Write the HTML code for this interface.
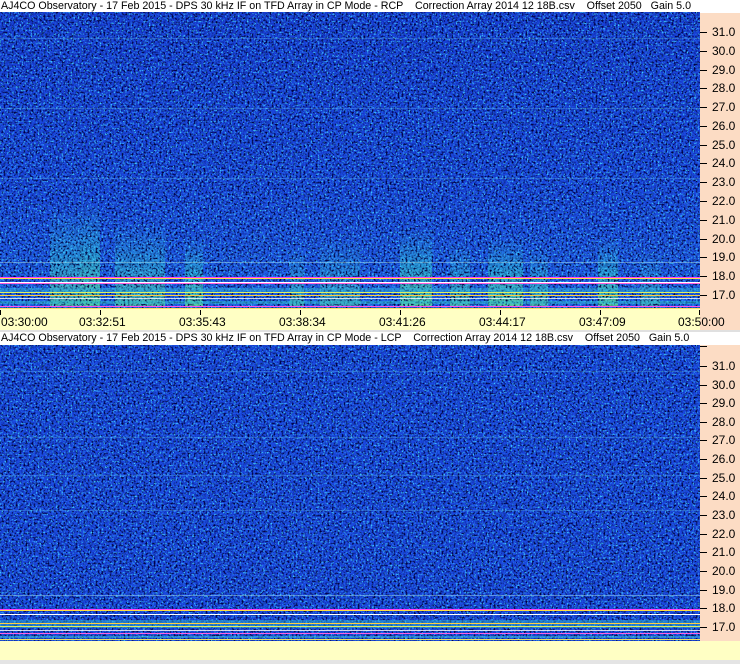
<!DOCTYPE html>
<html><head><meta charset="utf-8"><style>
*{margin:0;padding:0}
body{width:740px;height:664px;position:relative;background:#fcdcc4;overflow:hidden;font-family:"Liberation Sans",Arial,sans-serif}
.title{position:absolute;left:0;width:740px;height:13px;background:#fff;font-size:10.7px;line-height:13px;color:#000;white-space:pre;padding-left:1px}
.tbar{position:absolute;left:0;width:700px;background:#ffffc4}
.lab{position:absolute;font-size:12px;color:#000}
.tick{position:absolute;width:7px;height:1px;background:#000;left:700px}
.vt{position:absolute;width:1px;height:5px;background:#000;top:310px}
svg{position:absolute;left:0}
</style></head><body>
<svg width="0" height="0" style="position:absolute">
<defs>
<filter id="dk" x="0" y="0" width="100%" height="100%"><feTurbulence type="fractalNoise" baseFrequency="0.5" numOctaves="2" seed="3"/><feColorMatrix type="matrix" values="0 0 0 0 0  0 0 0 0 0  0 0 0 0 0.05  -4 0 0 0 2.1"/></filter>
<filter id="lt" x="0" y="0" width="100%" height="100%"><feTurbulence type="fractalNoise" baseFrequency="0.55" numOctaves="2" seed="7"/><feColorMatrix type="matrix" values="0 0 0 0 0.05  0 0 0 0 0.6  0 0 0 0 1  0 4 0 0 -2.2"/></filter>
<linearGradient id="st" x1="0" y1="0" x2="0" y2="1"><stop offset="0" stop-color="#30d0e0" stop-opacity="0"/><stop offset="0.5" stop-color="#30d8c8" stop-opacity="0.5"/><stop offset="1" stop-color="#70f080" stop-opacity="0.75"/></linearGradient>
<linearGradient id="bg1" x1="0" y1="0" x2="0" y2="1"><stop offset="0" stop-color="#1840d8"/><stop offset="0.6" stop-color="#1a48e0"/><stop offset="1" stop-color="#2060e8"/></linearGradient>
</defs></svg>

<div class="title" style="top:0">AJ4CO Observatory - 17 Feb 2015 - DPS 30 kHz IF on TFD Array in CP Mode - RCP    Correction Array 2014 12 18B.csv    Offset 2050   Gain 5.0</div>

<svg style="top:12px" width="700" height="297">
<rect width="700" height="297" fill="url(#bg1)"/>
<g fill="url(#st)">
<rect x="50" y="195" width="30" height="100" opacity=".8"/>
<rect x="80" y="190" width="20" height="105"/>
<rect x="115" y="210" width="50" height="85" opacity=".8"/>
<rect x="185" y="225" width="18" height="70"/>
<rect x="290" y="235" width="14" height="60" opacity=".7"/>
<rect x="320" y="225" width="40" height="70" opacity=".6"/>
<rect x="400" y="215" width="32" height="80"/>
<rect x="450" y="230" width="20" height="65" opacity=".8"/>
<rect x="488" y="225" width="35" height="70"/>
<rect x="530" y="235" width="18" height="60" opacity=".8"/>
<rect x="598" y="225" width="20" height="70"/>
<rect x="640" y="240" width="20" height="55" opacity=".6"/>
</g>
<rect width="700" height="297" filter="url(#dk)"/>
<rect width="700" height="297" filter="url(#lt)"/>
<g fill="#60c0f0" opacity=".3"><rect y="26" width="700" height="1"/><rect y="96" width="700" height="1"/><rect y="166" width="700" height="1"/></g>
<rect x="0" y="250" width="700" height="1" fill="#a0e0f0" opacity=".5"/>
<rect y="265" width="700" height="1" fill="#ff40ff"/>
<rect y="266" width="700" height="1" fill="#ffe040"/>
<rect y="270" width="700" height="1" fill="#ffffff"/>
<rect y="271" width="700" height="1" fill="#ff60e0"/>
<rect y="276" width="700" height="5" fill="#30b0e0" opacity=".5"/>
<rect y="280" width="700" height="1" fill="#e0f060"/>
<rect y="283" width="700" height="1" fill="#ffd040"/>
<rect y="286" width="700" height="1" fill="#ffffff" opacity=".8"/>
<rect y="289" width="700" height="3" fill="#30c0d0" opacity=".5"/>
<rect y="294" width="700" height="1" fill="#ff50f0"/>
<rect y="296" width="700" height="1" fill="#ffe060"/>
</svg>

<div class="tbar" style="top:309px;height:21px"></div>
<div class="vt" style="left:0"></div><div class="vt" style="left:100px"></div><div class="vt" style="left:200px"></div><div class="vt" style="left:300px"></div><div class="vt" style="left:400px"></div><div class="vt" style="left:500px"></div><div class="vt" style="left:600px"></div><div class="vt" style="left:699px"></div>
<div class="lab" style="top:315px;left:1px">03:30:00</div>
<div class="lab" style="top:315px;left:79px">03:32:51</div>
<div class="lab" style="top:315px;left:179px">03:35:43</div>
<div class="lab" style="top:315px;left:279px">03:38:34</div>
<div class="lab" style="top:315px;left:379px">03:41:26</div>
<div class="lab" style="top:315px;left:479px">03:44:17</div>
<div class="lab" style="top:315px;left:579px">03:47:09</div>
<div class="lab" style="top:315px;left:678px">03:50:00</div>
<div style="position:absolute;top:330px;left:0;width:740px;height:2px;background:#e0e0e0"></div>

<div class="title" style="top:332px">AJ4CO Observatory - 17 Feb 2015 - DPS 30 kHz IF on TFD Array in CP Mode - LCP    Correction Array 2014 12 18B.csv    Offset 2050   Gain 5.0</div>

<svg style="top:345px" width="700" height="296">
<rect width="700" height="296" fill="#1a48e0"/>
<rect width="700" height="296" filter="url(#dk)"/>
<rect width="700" height="296" filter="url(#lt)"/>
<g fill="#60c0f0" opacity=".3"><rect y="26" width="700" height="1"/><rect y="92" width="700" height="1"/><rect y="130" width="700" height="1"/><rect y="165" width="700" height="1"/></g>
<rect y="250" width="700" height="1" fill="#a0e0f0" opacity=".5"/>
<rect y="264" width="700" height="1" fill="#ff40ff"/>
<rect y="265" width="700" height="1" fill="#ffe040"/>
<rect y="269" width="700" height="1" fill="#ffffff"/>
<rect y="275" width="700" height="8" fill="#30b0d0" opacity=".5"/>
<rect y="278" width="700" height="1" fill="#ffd040"/>
<rect y="281" width="700" height="1" fill="#e0f060"/>
<rect y="285" width="700" height="1" fill="#ffffff" opacity=".8"/>
<rect y="288" width="700" height="1" fill="#ff60e0"/>
<rect y="291" width="700" height="2" fill="#40c8d8" opacity=".5"/>
<rect y="294" width="700" height="1" fill="#f0e060"/>
</svg>
<div class="tbar" style="top:641px;height:19px;width:740px"></div>
<div style="position:absolute;top:660px;left:0;width:740px;height:4px;background:#e4e4e4"></div>

<div class="tick" style="top:32px"></div><div class="lab" style="top:25px;left:712px">31.0</div>
<div class="tick" style="top:51px"></div><div class="lab" style="top:44px;left:712px">30.0</div>
<div class="tick" style="top:70px"></div><div class="lab" style="top:63px;left:712px">29.0</div>
<div class="tick" style="top:88px"></div><div class="lab" style="top:81px;left:712px">28.0</div>
<div class="tick" style="top:107px"></div><div class="lab" style="top:100px;left:712px">27.0</div>
<div class="tick" style="top:126px"></div><div class="lab" style="top:119px;left:712px">26.0</div>
<div class="tick" style="top:145px"></div><div class="lab" style="top:138px;left:712px">25.0</div>
<div class="tick" style="top:163px"></div><div class="lab" style="top:156px;left:712px">24.0</div>
<div class="tick" style="top:182px"></div><div class="lab" style="top:175px;left:712px">23.0</div>
<div class="tick" style="top:201px"></div><div class="lab" style="top:194px;left:712px">22.0</div>
<div class="tick" style="top:220px"></div><div class="lab" style="top:213px;left:712px">21.0</div>
<div class="tick" style="top:239px"></div><div class="lab" style="top:232px;left:712px">20.0</div>
<div class="tick" style="top:257px"></div><div class="lab" style="top:250px;left:712px">19.0</div>
<div class="tick" style="top:276px"></div><div class="lab" style="top:269px;left:712px">18.0</div>
<div class="tick" style="top:295px"></div><div class="lab" style="top:288px;left:712px">17.0</div>
<div class="tick" style="top:346px"></div>
<div class="tick" style="top:366px"></div><div class="lab" style="top:359px;left:712px">31.0</div>
<div class="tick" style="top:385px"></div><div class="lab" style="top:378px;left:712px">30.0</div>
<div class="tick" style="top:403px"></div><div class="lab" style="top:396px;left:712px">29.0</div>
<div class="tick" style="top:422px"></div><div class="lab" style="top:415px;left:712px">28.0</div>
<div class="tick" style="top:440px"></div><div class="lab" style="top:433px;left:712px">27.0</div>
<div class="tick" style="top:459px"></div><div class="lab" style="top:452px;left:712px">26.0</div>
<div class="tick" style="top:478px"></div><div class="lab" style="top:471px;left:712px">25.0</div>
<div class="tick" style="top:496px"></div><div class="lab" style="top:489px;left:712px">24.0</div>
<div class="tick" style="top:515px"></div><div class="lab" style="top:508px;left:712px">23.0</div>
<div class="tick" style="top:534px"></div><div class="lab" style="top:527px;left:712px">22.0</div>
<div class="tick" style="top:552px"></div><div class="lab" style="top:545px;left:712px">21.0</div>
<div class="tick" style="top:571px"></div><div class="lab" style="top:564px;left:712px">20.0</div>
<div class="tick" style="top:590px"></div><div class="lab" style="top:583px;left:712px">19.0</div>
<div class="tick" style="top:608px"></div><div class="lab" style="top:601px;left:712px">18.0</div>
<div class="tick" style="top:627px"></div><div class="lab" style="top:620px;left:712px">17.0</div>
</body></html>
